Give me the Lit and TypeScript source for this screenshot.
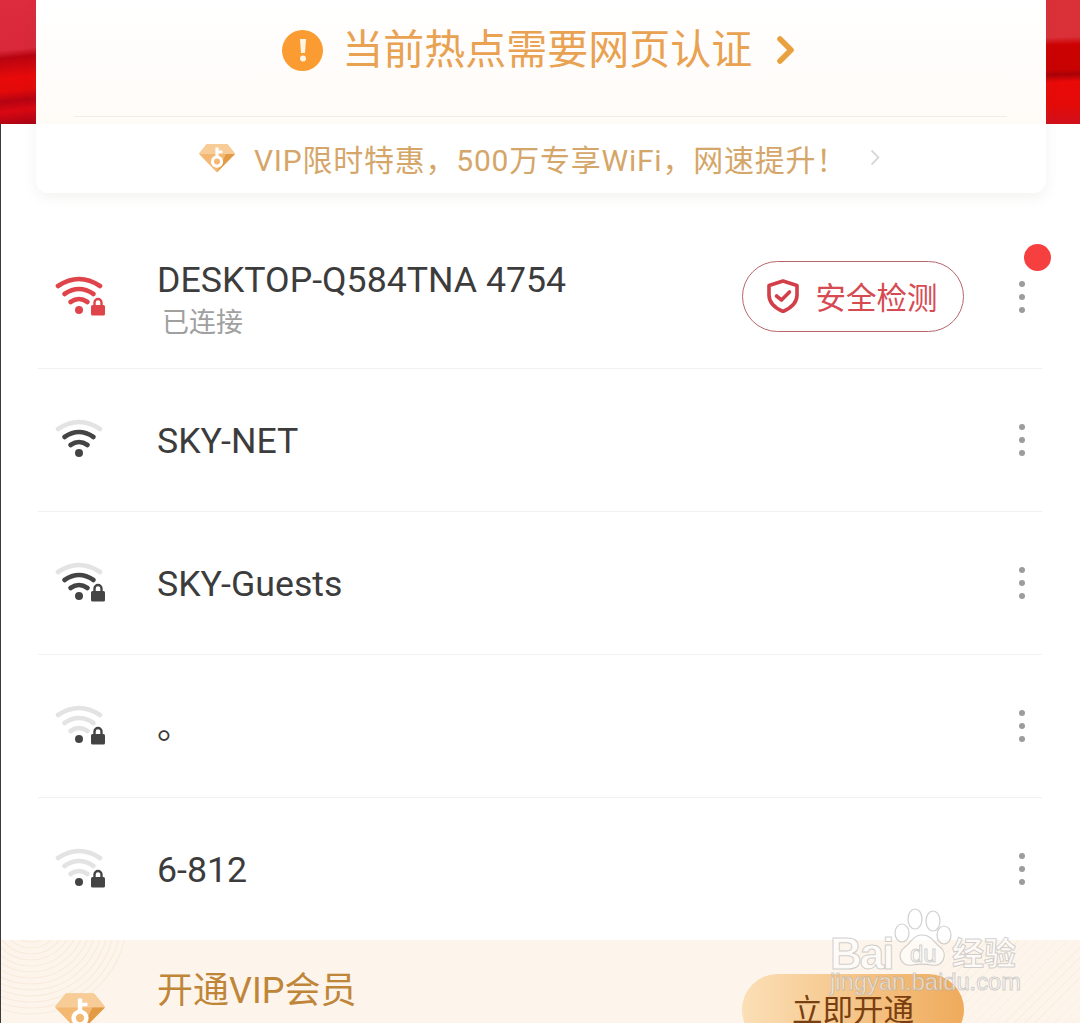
import { LitElement, html, css, svg } from "lit";
import { customElement } from "lit/decorators.js";

const RED = "#e0444b";
const DARK = "#444444";
const LIGHT = "#e3e3e3";

function wifi(level: number, locked: boolean, on: string) {
  const c = (n: number) => (level >= n ? on : LIGHT);
  return html`<svg class="wifi" viewBox="0 0 52 42" width="52" height="42" fill="none" stroke-linecap="round">
    <path d="M4 12 Q25 -2 46 12" stroke=${c(3)} stroke-width="4.6"></path>
    <path d="M10.5 20 Q25 10 39.5 20" stroke=${c(2)} stroke-width="4.6"></path>
    <path d="M16.5 28 Q25 22 33.5 28" stroke=${c(1)} stroke-width="4.6"></path>
    <circle cx="25" cy="36" r="4" fill=${on}></circle>
    ${locked
      ? svg`<rect x="37" y="31" width="14" height="10.5" rx="1.5" fill=${on}></rect>
            <path d="M40.5 32 V28.5 a3.5 3.5 0 0 1 7 0 V32" stroke=${on} stroke-width="2.4"></path>`
      : ""}
  </svg>`;
}

function diamond(w: number, h: number) {
  return html`<svg class="gem" viewBox="0 0 36 30" width=${w} height=${h}>
    <path d="M8.5 1 H27.5 Q28.5 1 29 2 L35.5 10 Q36 11 35 12 L19 28.5 Q18 29.5 17 28.5 L1 12 Q0 11 0.5 10 L7 2 Q7.5 1 8.5 1 Z" fill="#f3b973"></path>
    <path d="M8.5 1 H27.5 Q28.5 1 29 2 L35.5 10 L36 11 H0 L0.5 10 L7 2 Q7.5 1 8.5 1 Z" fill="#f7cc97"></path>
    <path d="M27 11 H36 L18 29 Z" fill="#e39a45"></path>
    <path d="M16.4 4.5 H19.6 V7.6 H23.4 V10.2 H19.6 V13 H16.4 Z" fill="#fff"></path>
    <circle cx="18" cy="18.6" r="4.6" fill="none" stroke="#fff" stroke-width="3.2"></circle>
  </svg>`;
}

const NETWORKS = [
  { name: "SKY-NET", level: 2, locked: false },
  { name: "SKY-Guests", level: 2, locked: true },
  { name: "。", level: 0, locked: true },
  { name: "6-812", level: 0, locked: true },
];

@customElement("app-root")
export class AppRoot extends LitElement {
  static styles = css`
    :host {
      display: block;
      width: 1080px;
      height: 1023px;
      overflow: hidden;
      position: relative;
      font-family: Roboto, "Noto Sans CJK SC", sans-serif;
      background: #fff;
    }
    .page {
      height: 1023px;
      overflow: hidden;
      display: flex;
      flex-direction: column;
      background:
        linear-gradient(174deg, #dc2c3e 0, #d8283a 40%, #b80410 46%, #e80a0a 62%, #e30a0a 72%, #b60312 80%, #d90812 88%, #a80214 100%) left top / 36px 124px no-repeat,
        linear-gradient(178deg, #da3038 0, #da3038 30%, #cc0202 36%, #c80202 56%, #a80208 60%, #ea0a08 66%, #e40a08 84%, #d0101c 100%) right top / 34px 124px no-repeat,
        linear-gradient(#3a3a3a, #3a3a3a) left 124px / 1px 100% no-repeat,
        #fff;
    }
    .card {
      margin: 0 34px 0 36px;
      background: #fff;
      border-radius: 0 0 12px 12px;
      box-shadow: 0 4px 14px rgba(120, 110, 100, 0.09);
      flex: none;
    }
    .hot {
      height: 124px;
      padding: 0 39px 7px 38px;
      box-sizing: border-box;
      background: linear-gradient(180deg, #ffffff 0, #fffbf7 100%);
    }
    .hot-inner {
      height: 117px;
      box-sizing: border-box;
      padding: 0 4px 16px 0;
      border-bottom: 1px solid #f0ece8;
      display: flex;
      align-items: center;
      justify-content: center;
      color: #e8a252;
      font-size: 41px;
      line-height: 50px;
    }
    .alert {
      width: 41px;
      height: 41px;
      border-radius: 50%;
      background: #fa9c31;
      display: grid;
      place-items: center;
      margin-right: 19px;
      flex: none;
    }
    .chev {
      margin-left: 24.5px;
      flex: none;
    }
    .vip {
      height: 69px;
      display: flex;
      align-items: center;
      justify-content: center;
      color: #d5a669;
      font-size: 30px;
      letter-spacing: 0.77px;
      padding: 0 3px 2px 0;
      box-sizing: border-box;
      white-space: nowrap;
    }
    .vip .gem {
      margin-right: 19px;
    }
    .vip .thin {
      margin-left: 23px;
    }
    .list {
      margin: 33px 38px -1px 38px;
      flex: none;
    }
    .row {
      height: 143px;
      box-sizing: border-box;
      border-bottom: 1px solid #f1f1f1;
      display: flex;
      align-items: center;
      padding: 0 10px 0 16px;
      position: relative;
    }
    .wifi {
      flex: none;
      margin: 0 51px 4px 0;
    }
    .info {
      flex: 1;
      min-width: 0;
      margin-left: 1px;
    }
    .first .info {
      padding-top: 4px;
    }
    .name {
      font-size: 35.7px;
      line-height: 40px;
      color: #3c3c3c;
      white-space: nowrap;
      margin-top: 2px;
      margin-left: -1px;
    }
    .sub {
      font-size: 27px;
      line-height: 36px;
      color: #a0a0a0;
      margin: 5px 0 0 4px;
    }
    .check {
      width: 222px;
      height: 71px;
      box-sizing: border-box;
      border: 1px solid #b8666b;
      border-radius: 36px;
      display: flex;
      align-items: center;
      justify-content: center;
      gap: 17px;
      color: #d64a52;
      font-size: 30.5px;
      margin: 0 48px 2px 0;
      padding-right: 2px;
      flex: none;
    }
    .more {
      width: 20px;
      display: flex;
      flex-direction: column;
      align-items: center;
      gap: 6.6px;
      flex: none;
    }
    .more i {
      width: 6.6px;
      height: 6.6px;
      border-radius: 50%;
      background: #9c9c9c;
    }
    .badge {
      position: absolute;
      left: 986px;
      top: 18px;
      width: 27px;
      height: 27px;
      border-radius: 50%;
      background: #f5403f;
    }
    .banner {
      margin-left: 1px;
      height: 83px;
      flex: none;
      display: flex;
      background: #fdf5ec;
      position: relative;
      overflow: hidden;
    }
    .rings {
      position: absolute;
      left: 0;
      top: 0;
    }
    .stripes {
      position: absolute;
      right: 0;
      top: 0;
      width: 150px;
      height: 83px;
      background: repeating-linear-gradient(135deg, transparent 0 6px, #fbefe2 6px 7px);
    }
    .banner-gem {
      margin: 52px 0 0 54px;
      position: relative;
      flex: none;
    }
    .banner-title {
      position: relative;
      margin: 30px 0 0 52px;
      font-size: 36px;
      line-height: 42px;
      color: #bf8639;
      flex: none;
      width: 585px;
    }
    .open {
      position: relative;
      width: 222px;
      height: 71px;
      margin-top: 34px;
      border-radius: 36px;
      background: linear-gradient(90deg, #fbdfb6, #efab5c);
      color: #7a3f10;
      font-size: 30.5px;
      display: flex;
      justify-content: center;
      padding-top: 17px;
      box-sizing: border-box;
      line-height: 40px;
      flex: none;
    }
    .mark {
      position: absolute;
      left: 828px;
      top: 905px;
      width: 200px;
      height: 92px;
      color: rgba(255, 255, 255, 0.6);
      -webkit-text-stroke: 1px rgba(170, 170, 170, 0.55);
      font-family: "Liberation Sans", sans-serif;
    }
    .mark svg {
      position: absolute;
      left: 60px;
      top: 0;
    }
    .mark span {
      position: absolute;
      white-space: nowrap;
    }
    .m-bai {
      left: 2px;
      top: 26px;
      font-size: 44px;
      line-height: 46px;
      font-weight: 700;
      letter-spacing: -2px;
    }
    .m-du {
      left: 82px;
      top: 35px;
      font-size: 24px;
      line-height: 28px;
    }
    .m-cn {
      left: 124px;
      top: 26px;
      font-size: 32px;
      line-height: 40px;
      font-weight: 700;
      font-family: "Noto Sans CJK SC", sans-serif;
    }
    .m-url {
      left: 2px;
      top: 63px;
      font-size: 23.7px;
      line-height: 28px;
    }
  `;

  render() {
    return html`
      <div class="page">
        <div class="card">
          <div class="hot">
            <div class="hot-inner">
              <span class="alert">
                <svg width="8" height="24" viewBox="0 0 8 24">
                  <path d="M1 1 H7 L6 15 H2 Z" fill="#fff5e6"></path>
                  <circle cx="4" cy="20.5" r="3" fill="#fff5e6"></circle>
                </svg>
              </span>
              <span>当前热点需要网页认证</span>
              <svg class="chev" width="18" height="28" viewBox="0 0 18 28" fill="none">
                <path d="M3 3 L14 14 L3 25" stroke="#e9a03f" stroke-width="5.6" stroke-linecap="round" stroke-linejoin="round"></path>
              </svg>
            </div>
          </div>
          <div class="vip">
            ${diamond(36, 30)}
            <span>VIP限时特惠，500万专享WiFi，网速提升！</span>
            <svg class="thin" width="10" height="17" viewBox="0 0 10 17" fill="none">
              <path d="M1.5 1.5 L8.5 8.5 L1.5 15.5" stroke="#d8d8d8" stroke-width="1.8"></path>
            </svg>
          </div>
        </div>

        <div class="list">
          <div class="row first">
            ${wifi(3, true, RED)}
            <div class="info">
              <div class="name">DESKTOP-Q584TNA 4754</div>
              <div class="sub">已连接</div>
            </div>
            <div class="check">
              <svg width="32" height="34" viewBox="0 0 32 34" fill="none" stroke="#d23f48" stroke-width="3.6" stroke-linejoin="round" stroke-linecap="round">
                <path d="M16 2 L30 6.5 V16 C30 25 23 29.5 16 32.5 C9 29.5 2 25 2 16 V6.5 Z"></path>
                <path d="M9.5 17 L14.5 21 L22.5 13"></path>
              </svg>
              <span>安全检测</span>
            </div>
            <div class="more"><i></i><i></i><i></i></div>
            <span class="badge"></span>
          </div>
          ${NETWORKS.map(
            (n) => html`<div class="row">
              ${wifi(n.level, n.locked, DARK)}
              <div class="info"><div class="name">${n.name}</div></div>
              <div class="more"><i></i><i></i><i></i></div>
            </div>`
          )}
        </div>

        <div class="banner">
          <svg class="rings" width="150" height="83" viewBox="0 0 150 83" fill="none" stroke="#f9ebdc" stroke-width="1.2">
            ${[24, 30, 36, 42, 48, 54, 60, 66, 72, 78, 84, 90, 96].map(
              (r) => svg`<circle cx="30" cy="-22" r=${r}></circle>`
            )}
          </svg>
          <div class="stripes"></div>
          <span class="banner-gem">${diamond(50, 42)}</span>
          <div class="banner-title">开通VIP会员</div>
          <div class="open">立即开通</div>
        </div>

        <div class="mark">
          <svg width="70" height="72" viewBox="0 0 70 72" fill="rgba(255,255,255,.55)" stroke="rgba(170,170,170,.55)" stroke-width="1.2">
            <ellipse cx="27" cy="14" rx="7" ry="10"></ellipse>
            <ellipse cx="45" cy="16" rx="7" ry="10"></ellipse>
            <ellipse cx="14" cy="28" rx="7" ry="9"></ellipse>
            <ellipse cx="56" cy="30" rx="7" ry="9"></ellipse>
            <path d="M34 30 C44 30 46 38 52 42 C60 48 56 62 44 60 C38 59 30 59 24 60 C12 62 8 48 17 42 C23 38 25 30 34 30 Z"></path>
          </svg>
          <span class="m-bai">Bai</span>
          <span class="m-du">du</span>
          <span class="m-cn">经验</span>
          <span class="m-url">jingyan.baidu.com</span>
        </div>
      </div>
    `;
  }
}
